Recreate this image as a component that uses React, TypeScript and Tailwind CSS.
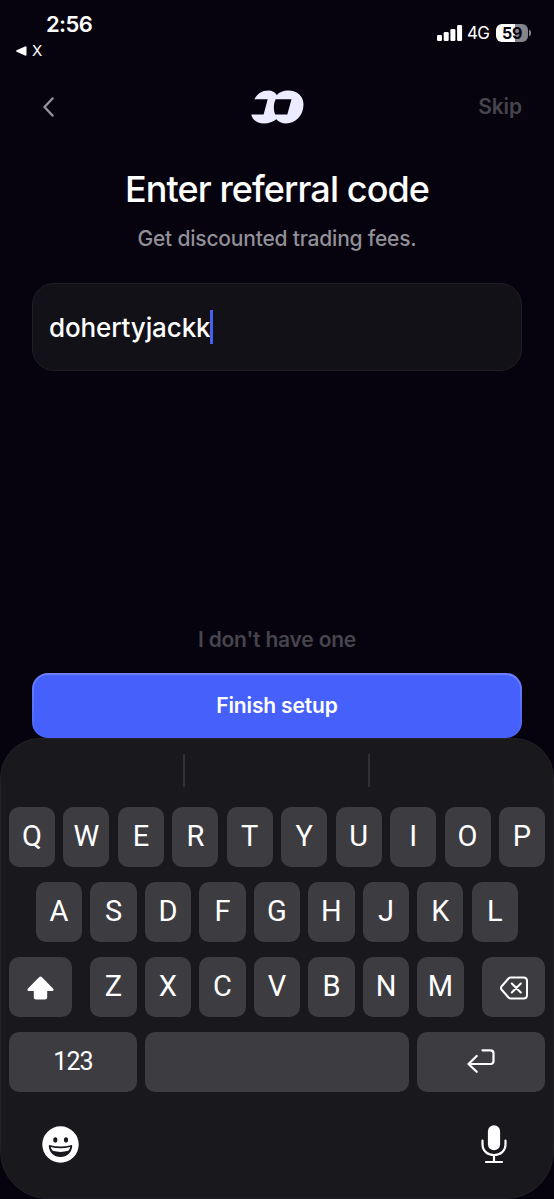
import { ReactNode, useState } from "react";

interface KeyProps {
  children?: ReactNode;
  label?: string;
  className?: string;
  onClick?: () => void;
}

const TOP_ROW = "QWERTYUIOP".split("");
const MIDDLE_ROW = "ASDFGHJKL".split("");
const BOTTOM_ROW = "ZXCVBNM".split("");

function Logo() {
  return (
    <svg width="53" height="34" viewBox="0 0 53 34" aria-label="Logo">
      <path
        fill="#ecebff"
        fillRule="evenodd"
        d="M3.300 9.300C6.500 3.500 11 .500 17.500 .500C21 .500 24 2 25.800 5C28.500 2 32.500 .500 37 .500C46.500 .500 52.500 6.300 52.500 14.500C52.500 25 44.800 33.500 35 33.500C31 33.500 27.500 32 25.300 29.300C22 32 18 33.500 13 33.500C6 33.500 1.500 30 .200 24.500H12.600L16.700 9.300ZM24.700 9.300C22.700 13 22 20 24.300 24.500H36.300L40.500 9.300Z"
      />
    </svg>
  );
}

function StatusBar() {
  return (
    <header className="flex h-[68px] shrink-0 justify-between pr-[23px] pl-4">
      <div className="pt-[11px]">
        <time className="block pl-[30px] text-[22px] leading-[26px] font-semibold tracking-[-0.6px]">
          2:56
        </time>
        <div className="flex items-center gap-[5px] pt-[5px] text-[15px] leading-[18px]">
          <svg width="11" height="10" viewBox="0 0 11 10" fill="currentColor">
            <path d="M.6 4.3 9 .4Q10.500 0 10.500 1.300V8.700Q10.500 10 9 9.600L.6 5.700Q-.3 5 .6 4.300Z" />
          </svg>
          <span>X</span>
        </div>
      </div>
      <div className="mt-6 flex h-[18px] items-center">
        <svg width="26" height="16" viewBox="0 0 26 16" fill="currentColor">
          <rect x="0" y="10" width="5" height="6" rx="1.300" />
          <rect x="6.700" y="7" width="5" height="9" rx="1.300" />
          <rect x="13.400" y="4" width="5" height="12" rx="1.300" />
          <rect x="20.100" y="0" width="5" height="16" rx="1.300" />
        </svg>
        <span className="ml-[4px] w-[23px] pt-[2px] text-[17px] tracking-[-0.8px]">4G</span>
        <div className="ml-[6px] flex h-[18px] w-8 items-center justify-center rounded-md bg-linear-to-r from-white from-59% to-[#85848b] to-59% text-[16px] font-bold tracking-[-0.4px] text-[#07040f]">
          59
        </div>
        <span className="ml-[1px] h-[6px] w-[2px] rounded-r-full bg-[#85848b]" />
      </div>
    </header>
  );
}

function Key({ children, label, className = "flex-1", onClick }: KeyProps) {
  return (
    <button
      type="button"
      aria-label={label}
      onClick={onClick}
      className={`flex h-[60px] min-w-0 items-center justify-center rounded-[10px] bg-[#3d3c41] font-[Roboto,sans-serif] text-[29px] ${className}`}
    >
      {children}
    </button>
  );
}

function Keyboard({ onType, onDelete }: { onType: (key: string) => void; onDelete: () => void }) {
  const renderKeys = (keys: string[]) =>
    keys.map((key) => (
      <Key key={key} onClick={() => onType(key.toLowerCase())}>
        {key}
      </Key>
    ));

  return (
    <section className="flex h-[461px] shrink-0 flex-col rounded-t-[40px] rounded-b-[48px] border border-[#222128] bg-[#19181d] px-2">
      <div className="mt-[15px] mb-[20px] flex h-[33px] justify-between pr-[175.500px] pl-[174px]">
        <span className="w-[1.500px] bg-[#303036]" />
        <span className="w-[1.500px] bg-[#303036]" />
      </div>
      <div className="flex flex-col gap-[15px]">
        <div className="flex gap-[8.400px]">{renderKeys(TOP_ROW)}</div>
        <div className="flex gap-[8.400px] px-[27px]">{renderKeys(MIDDLE_ROW)}</div>
        <div className="flex gap-[18.700px]">
          <Key label="Shift" className="w-[62.700px]">
            <svg width="27" height="24" viewBox="0 0 27 24" fill="white" className="mt-[1px]">
              <path d="M12.300 1Q13.500 0 14.700 1L26 12.500Q27.500 15 25 15H20.200V21Q20.200 23.500 17.700 23.500H9.300Q6.800 23.500 6.800 21V15H2Q-.5 15 1 12.500Z" />
            </svg>
          </Key>
          <div className="flex flex-1 gap-[8.400px]">{renderKeys(BOTTOM_ROW)}</div>
          <Key label="Delete" className="w-[62.700px]" onClick={onDelete}>
            <svg width="28" height="24" viewBox="0 0 28 24" fill="none" stroke="white" strokeWidth="2" strokeLinecap="round" strokeLinejoin="round" className="mt-[1px]">
              <path d="M10.500 1.500H23.500Q27 1.500 27 5V19Q27 22.500 23.500 22.500H10.500Q9.500 22.500 8.500 21.500L1.500 13.500Q.4 12 1.500 10.500L8.500 2.500Q9.500 1.500 10.500 1.500ZM11.800 7.500l9 9M20.800 7.500l-9 9" />
            </svg>
          </Key>
        </div>
        <div className="flex gap-[8.400px]">
          <Key className="w-32">
            <span className="text-[25px] tracking-[-0.9px]">123</span>
          </Key>
          <Key label="Space" onClick={() => onType(" ")} />
          <Key label="Return" className="w-32">
            <svg width="28" height="24" viewBox="0 0 28 24" fill="none" stroke="white" strokeWidth="2.200" strokeLinecap="round" strokeLinejoin="round" className="-mt-[2px]">
              <path d="M15.500 1.300H23.500Q26.500 1.300 26.500 4.300V12Q26.500 15 23.500 15H1.500M9.700 7 1.500 15l8.200 7.800" />
            </svg>
          </Key>
        </div>
      </div>
      <footer className="flex items-start justify-between pt-[33px] pr-[38px] pl-[33px]">
        <svg width="37" height="37" viewBox="0 0 37 37" className="mt-[1px]" aria-label="Emoji">
          <circle cx="18.500" cy="18.500" r="18.200" fill="white" />
          <ellipse cx="13.300" cy="14" rx="2.100" ry="2.700" fill="#19181d" />
          <ellipse cx="24" cy="14" rx="2.100" ry="2.700" fill="#19181d" />
          <path fill="#19181d" d="M6.800 20.300Q6.500 18.800 8.200 19.200Q18.500 21.700 28.800 19.200Q30.500 18.800 30.200 20.300C29.500 27 25.200 31 18.500 31S7.500 27 6.800 20.300Z" />
          <path fill="white" d="M8.700 21Q18.500 23.600 28.300 21Q27.800 23.300 26.300 24.800Q18.500 27 10.700 24.800Q9.200 23.300 8.700 21Z" />
        </svg>
        <svg width="26" height="39" viewBox="0 0 26 39" fill="none" aria-label="Dictation">
          <rect x="6.900" y=".3" width="12.200" height="25" rx="6.100" fill="white" />
          <path d="M1.500 15.500V19C1.500 26 6.500 30 13 30S24.500 26 24.500 19V15.500M13 30v7M5 37h16" stroke="white" strokeWidth="2.200" strokeLinecap="round" />
        </svg>
      </footer>
    </section>
  );
}

export default function App() {
  const [code, setCode] = useState("dohertyjackk");

  return (
    <div className="flex h-[1199px] w-full flex-col overflow-hidden bg-[#06030e] font-[Inter,sans-serif] text-white">
      <StatusBar />
      <main className="flex flex-1 flex-col px-8">
        <nav className="flex h-[78px] items-center justify-between">
          <button type="button" aria-label="Back" className="w-11 pl-[11px]">
            <svg width="11" height="20" viewBox="0 0 11 20" fill="none" stroke="#929098" strokeWidth="2.500" strokeLinecap="round" strokeLinejoin="round">
              <path d="M9.500 1.500 1.500 10l8 8.500" />
            </svg>
          </button>
          <Logo />
          <button type="button" className="flex w-11 justify-end text-[21px] font-semibold tracking-[-0.1px] text-[#46454d]">
            Skip
          </button>
        </nav>
        <h1 className="mt-[21px] text-center text-[36px] leading-[44px] font-medium tracking-[-0.9px]">
          Enter referral code
        </h1>
        <p className="mt-[14px] text-center text-[21px] leading-[28px] font-medium tracking-[-0.2px] text-[#929098]">
          Get discounted trading fees.
        </p>
        <div className="mt-[30px] flex h-[88px] items-center rounded-[22px] border border-[#201f26] bg-[#121117] px-[16px]">
          <span className="text-[26px] font-medium tracking-[-0.12px]">{code}</span>
          <span className="h-[34px] w-[3px] bg-[#4560f0]" />
        </div>
        <button type="button" className="mt-auto mb-[19px] text-[21px] leading-[28px] font-semibold tracking-[-0.2px] text-[#46454d]">
          I don't have one
        </button>
        <button type="button" className="h-[65px] rounded-2xl bg-linear-to-b from-[#6d80fb] to-[#4661fb] p-[2px]">
          <span className="flex h-full items-center justify-center rounded-[14px] bg-[#4661fb] pt-px text-[21px] font-semibold tracking-[-0.15px]">
            Finish setup
          </span>
        </button>
      </main>
      <Keyboard
        onType={(key) => setCode((value) => value + key)}
        onDelete={() => setCode((value) => value.slice(0, -1))}
      />
    </div>
  );
}
